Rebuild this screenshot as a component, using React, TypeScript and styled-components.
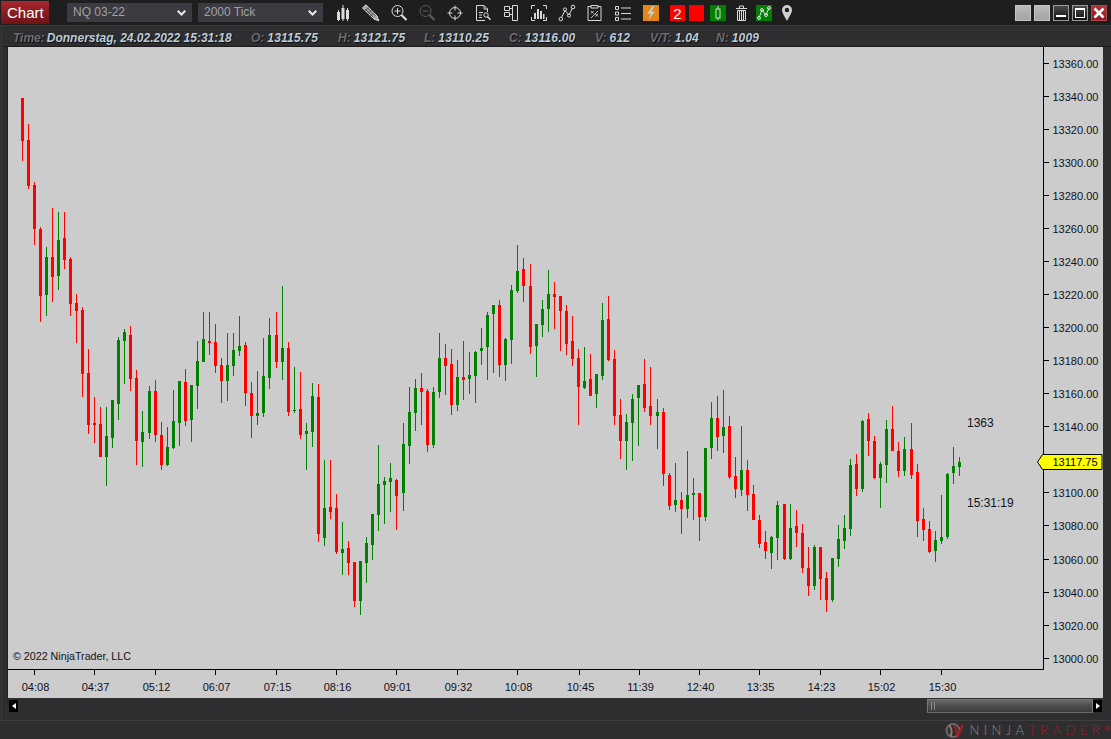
import React from "react";
import styled, { createGlobalStyle } from "styled-components";

const Global = createGlobalStyle`
  html, body { margin: 0; padding: 0; background: #2e2e30; overflow: hidden; }
  body { font-family: "Liberation Sans", Arial, sans-serif; }
`;

const Window = styled.div`
  width: 1111px;
  height: 739px;
  background: #2e2e30;
  display: flex;
  flex-direction: column;
  overflow: hidden;
`;
const TitleBar = styled.div`
  height: 24px;
  padding-top: 1px;
  background: #1e1e1f;
  border-bottom: 1px solid #39393b;
  box-sizing: content-box;
  display: flex;
  align-items: flex-start;
  flex: none;
`;
const ChartTab = styled.div`
  width: 48px;
  height: 23px;
  margin-left: 1px;
  background: linear-gradient(#a8272d, #6d1317);
  color: #fff;
  font-size: 15px;
  line-height: 24px;
  padding-left: 6px;
  box-sizing: border-box;
`;
const Picker = styled.div<{ $first?: boolean }>`
  width: 125px;
  height: 19px;
  margin-top: 2px;
  margin-left: ${(p) => (p.$first ? "18px" : "6px")};
  background: #3b3b41;
  color: #a2a2a8;
  font-size: 12px;
  line-height: 19px;
  padding: 0 6px;
  box-sizing: border-box;
  display: flex;
  justify-content: space-between;
  align-items: center;
`;
const Tools = styled.div`
  display: flex;
  align-items: flex-start;
  margin-left: 6px;
  margin-top: 3px;
`;
const ToolSlot = styled.div<{ $w?: number; $ml?: number }>`
  width: ${(p) => p.$w ?? 28}px;
  margin-left: ${(p) => p.$ml ?? 0}px;
  height: 18px;
  display: flex;
  justify-content: center;
  flex: none;
`;
const ColorBox = styled.div<{ $bg: string; $w?: number; $ml: number }>`
  width: ${(p) => p.$w ?? 16}px;
  margin-left: ${(p) => p.$ml}px;
  height: 16px;
  margin-top: 1px;
  background: ${(p) => p.$bg};
  color: #fff;
  font-size: 15px;
  line-height: 17px;
  text-align: center;
  flex: none;
  display: flex;
  justify-content: center;
`;
const WinButtons = styled.div`
  margin-left: auto;
  margin-right: 4px;
  margin-top: 4px;
  display: flex;
  gap: 3px;
`;
const WinButton = styled.div<{ $kind: "plain" | "dark" | "close" }>`
  width: 16px;
  height: 16px;
  box-sizing: border-box;
  position: relative;
  border: 1px solid ${(p) => (p.$kind === "dark" ? "#9a9a9a" : p.$kind === "close" ? "#b5454a" : "#c4c4c4")};
  background: ${(p) =>
    p.$kind === "plain"
      ? "linear-gradient(#bababa, #a4a4a4)"
      : p.$kind === "dark"
      ? "linear-gradient(#4a4a4a, #111)"
      : "linear-gradient(#b03036, #8a1d22)"};
  display: flex;
  align-items: center;
  justify-content: center;
`;
const Body = styled.div`
  margin-left: 1px;
  border-left: 1px solid #3a3a3c;
  border-bottom: 1px solid #3e3e40;
  padding-bottom: 7px;
  flex: none;
`;
const InfoRow = styled.div`
  height: 21px;
  display: flex;
  align-items: center;
  padding-left: 11px;
  padding-top: 3px;
  box-sizing: border-box;
  font-size: 12px;
  font-weight: bold;
  font-style: italic;
  text-shadow: 1px 1px 0 #111;
  border-bottom: 1px solid #1b1b1b;
`;
const InfoItem = styled.span<{ $w: number; $gap?: number }>`
  width: ${(p) => p.$w}px;
  flex: none;
  white-space: nowrap;
  display: flex;
  gap: ${(p) => p.$gap ?? 3}px;
`;
const InfoLabel = styled.span`
  color: #6c6c70;
`;
const InfoValue = styled.span<{ $num?: boolean }>`
  color: #bccbd8;
  letter-spacing: ${(p) => (p.$num ? "0.2px" : "0")};
`;
const ChartFrame = styled.div`
  margin-left: 6px;
  width: 1095px;
  height: 651px;
  background: #cccccc;
  box-shadow: -1px 0 0 #232325;
`;
const ChartSvg = styled.svg`
  display: block;
  font-family: "Liberation Sans", Arial, sans-serif;
  font-size: 11px;
`;
const ScrollRow = styled.div`
  margin: 1px 0 0 7px;
  width: 1093px;
  height: 14px;
  display: flex;
  align-items: stretch;
`;
const ScrollBtn = styled.div`
  width: 9px;
  background: #000;
  display: flex;
  align-items: center;
  justify-content: center;
  flex: none;
  margin-top: 1px;
  margin-bottom: 1px;
`;
const Arrow = styled.div<{ $left?: boolean }>`
  width: 0;
  height: 0;
  border-top: 3px solid transparent;
  border-bottom: 3px solid transparent;
  ${(p) => (p.$left ? "border-right: 4px solid #fff;" : "border-left: 4px solid #fff;")}
`;
const Thumb = styled.div`
  margin-left: auto;
  width: 166px;
  box-sizing: border-box;
  border: 1px solid #777;
  border-bottom-color: #6a6a6a;
  background: linear-gradient(#696969, #4a4a4a 55%, #3c3c3c);
  display: flex;
  align-items: center;
  padding-left: 3px;
  gap: 1px;
`;
const Grip = styled.div`
  width: 1px;
  height: 8px;
  background: #8a8a8a;
  margin-right: 1px;
`;
const Footer = styled.div`
  flex: 1;
  display: flex;
  align-items: center;
  justify-content: flex-end;
  padding-right: 1px;
  box-sizing: border-box;
`;
const Brand = styled.span<{ $red?: boolean }>`
  font-family: Lato, "Liberation Sans", sans-serif;
  font-weight: 300;
  font-size: 13px;
  letter-spacing: 4.4px;
  color: ${(p) => (p.$red ? "#a31d24" : "#85858a")};
`;
const Reg = styled.span`
  color: #a31d24;
  font-size: 8px;
  align-self: flex-start;
  margin-top: 3px;
  font-family: "Liberation Sans", sans-serif;
`;

type Row = [number, number, number, number, number, "r" | "g"];
const seg = (ox: number, oy: number, rows: Row[]) => rows.map((r) => ({
  x: ox + Math.floor((r[0] - 1) / 3),
  hi: Math.round(oy + r[1] / 3),
  top: Math.round(oy + r[2] / 3),
  bot: Math.round(oy + r[3] / 3),
  lo: Math.round(oy + r[4] / 3),
  c: r[5] === "r" ? "#ff0000" : "#008000",
}));

const candles = [
  ...seg(10, 90, [
    [37, 24, 24, 153, 213, "r"],
    [55, 102, 150, 288, 297, "r"],
    [73, 276, 285, 417, 465, "r"],
    [91, 411, 417, 618, 696, "r"],
    [109, 471, 501, 615, 678, "g"],
    [127, 354, 501, 561, 636, "r"],
    [145, 366, 450, 558, 600, "g"],
    [163, 366, 444, 510, 537, "r"],
    [181, 501, 507, 642, 678, "r"],
  ]),
  ...seg(10, 280, [
    [199, 42, 69, 93, 189, "r"],
    [217, 81, 90, 282, 351, "r"],
    [235, 207, 279, 435, 462, "r"],
    [253, 351, 429, 435, 489, "r"],
    [271, 381, 432, 531, 531, "r"],
    [289, 381, 468, 531, 618, "g"],
    [307, 360, 360, 474, 504, "g"],
    [325, 171, 180, 372, 420, "g"],
    [343, 147, 156, 183, 312, "g"],
    [361, 138, 165, 297, 333, "r"],
    [379, 270, 294, 483, 555, "r"],
    [397, 393, 456, 486, 561, "g"],
    [418, 318, 333, 459, 477, "g"],
    [436, 300, 333, 465, 486, "r"],
    [454, 426, 465, 555, 570, "r"],
    [472, 441, 501, 555, 558, "g"],
    [490, 330, 423, 504, 507, "g"],
    [508, 303, 303, 429, 498, "g"],
  ]),
  ...seg(160, 280, [
    [76, 267, 306, 423, 438, "r"],
    [94, 315, 315, 420, 486, "g"],
    [112, 183, 243, 318, 387, "g"],
    [130, 96, 177, 246, 246, "g"],
    [148, 96, 183, 189, 225, "r"],
    [166, 132, 186, 258, 279, "r"],
    [184, 234, 255, 303, 369, "r"],
    [202, 159, 255, 303, 363, "g"],
    [220, 159, 210, 258, 288, "g"],
    [238, 108, 198, 213, 228, "g"],
    [256, 186, 195, 339, 378, "r"],
    [274, 306, 339, 408, 474, "r"],
    [292, 273, 399, 408, 435, "g"],
    [310, 174, 288, 399, 411, "g"],
    [328, 114, 165, 294, 327, "g"],
    [349, 96, 165, 246, 264, "r"],
    [367, 18, 204, 246, 300, "g"],
    [385, 186, 204, 396, 408, "r"],
    [403, 261, 390, 393, 399, "g"],
    [421, 276, 387, 465, 477, "r"],
    [439, 429, 453, 462, 570, "g"],
    [457, 309, 348, 456, 501, "g"],
    [475, 312, 351, 762, 786, "r"],
    [493, 540, 684, 774, 798, "g"],
    [511, 540, 681, 696, 717, "r"],
    [529, 642, 684, 816, 822, "r"],
    [547, 726, 807, 819, 885, "g"],
    [565, 783, 804, 849, 885, "r"],
    [583, 846, 846, 963, 981, "r"],
    [601, 843, 843, 963, 1005, "g"],
    [619, 771, 789, 849, 909, "g"],
  ]),
  ...seg(360, 240, [
    [37, 822, 822, 915, 960, "g"],
    [55, 615, 732, 825, 873, "g"],
    [73, 711, 723, 735, 852, "g"],
    [91, 669, 714, 726, 816, "g"],
    [109, 717, 720, 768, 870, "r"],
    [130, 549, 612, 759, 813, "g"],
    [148, 441, 516, 618, 672, "g"],
    [166, 417, 444, 519, 573, "g"],
    [184, 399, 444, 456, 555, "r"],
    [202, 447, 453, 615, 636, "r"],
    [220, 441, 456, 615, 624, "g"],
    [238, 279, 354, 456, 474, "g"],
    [256, 312, 354, 378, 465, "r"],
    [274, 327, 372, 495, 525, "r"],
    [292, 360, 411, 495, 513, "g"],
    [310, 303, 411, 420, 480, "r"],
    [328, 336, 405, 417, 462, "g"],
    [346, 333, 336, 408, 489, "g"],
    [364, 264, 324, 333, 375, "g"],
    [382, 216, 225, 321, 420, "g"],
    [400, 195, 195, 222, 399, "g"],
    [418, 180, 195, 375, 411, "r"],
    [436, 294, 297, 375, 423, "g"],
    [454, 135, 150, 300, 372, "g"],
    [472, 15, 93, 153, 159, "g"],
    [490, 54, 87, 138, 186, "r"],
    [511, 72, 138, 321, 342, "r"],
    [529, 252, 252, 318, 411, "g"],
    [547, 180, 207, 255, 291, "g"],
    [565, 90, 162, 207, 276, "g"],
    [583, 126, 162, 171, 267, "r"],
    [601, 168, 168, 213, 333, "r"],
    [619, 195, 213, 312, 345, "r"],
  ]),
  ...seg(560, 290, [
    [37, 78, 153, 207, 228, "r"],
    [55, 177, 204, 291, 405, "r"],
    [73, 171, 273, 294, 297, "g"],
    [91, 192, 267, 318, 318, "r"],
    [109, 252, 252, 312, 354, "g"],
    [127, 39, 90, 258, 270, "g"],
    [145, 18, 87, 210, 213, "r"],
    [163, 180, 207, 378, 405, "r"],
    [181, 327, 375, 453, 507, "r"],
    [199, 372, 396, 453, 540, "g"],
    [217, 312, 327, 399, 513, "g"],
    [235, 285, 285, 324, 468, "g"],
    [253, 207, 282, 354, 366, "r"],
    [271, 231, 348, 378, 405, "r"],
    [292, 327, 366, 378, 477, "g"],
    [310, 354, 366, 552, 588, "r"],
    [328, 549, 555, 648, 660, "r"],
    [346, 519, 630, 645, 666, "g"],
    [364, 606, 630, 657, 732, "r"],
    [382, 483, 615, 657, 684, "g"],
    [400, 564, 609, 615, 690, "g"],
    [418, 609, 609, 681, 753, "r"],
    [436, 474, 474, 681, 693, "g"],
    [454, 336, 384, 474, 507, "g"],
    [472, 318, 384, 441, 483, "r"],
    [490, 300, 411, 438, 489, "g"],
    [508, 378, 408, 561, 567, "r"],
    [526, 501, 558, 597, 624, "r"],
    [544, 408, 540, 600, 618, "g"],
    [562, 510, 540, 615, 663, "r"],
    [580, 585, 612, 690, 690, "r"],
    [598, 675, 690, 762, 774, "r"],
  ]),
  ...seg(760, 400, [
    [16, 393, 426, 453, 477, "r"],
    [34, 408, 411, 459, 507, "g"],
    [52, 303, 315, 414, 480, "g"],
    [73, 312, 312, 477, 480, "r"],
    [91, 312, 384, 477, 480, "g"],
    [109, 330, 378, 399, 441, "r"],
    [127, 372, 399, 504, 519, "r"],
    [145, 441, 504, 558, 588, "r"],
    [163, 435, 441, 558, 570, "g"],
    [181, 441, 441, 537, 600, "r"],
    [199, 516, 534, 600, 636, "r"],
    [217, 474, 474, 600, 606, "g"],
    [235, 375, 417, 477, 501, "g"],
    [253, 345, 384, 423, 447, "g"],
    [271, 177, 195, 387, 408, "g"],
    [289, 162, 192, 267, 288, "r"],
    [307, 60, 63, 267, 276, "g"],
    [325, 39, 57, 123, 168, "r"],
    [343, 108, 123, 234, 237, "r"],
    [361, 186, 192, 234, 324, "g"],
    [379, 60, 87, 195, 249, "g"],
    [397, 18, 87, 153, 153, "r"],
    [415, 126, 153, 213, 231, "r"],
    [433, 111, 147, 213, 228, "g"],
    [454, 69, 147, 225, 237, "r"],
    [472, 192, 216, 363, 411, "r"],
    [490, 324, 357, 390, 423, "r"],
    [508, 363, 387, 456, 459, "r"],
    [526, 393, 420, 453, 486, "g"],
    [544, 285, 411, 423, 432, "g"],
    [562, 219, 222, 411, 417, "g"],
    [580, 141, 198, 219, 252, "g"],
    [598, 171, 186, 201, 228, "g"],
  ]),
];

const prices = Array.from({ length: 19 }, (_, i) => ({
  label: (13360 - i * 20).toFixed(2),
  y: Math.round(62.6 + i * 33.06),
})).filter((p) => p.label !== "13120.00");
const times: [string, number][] = [
  ["04:08", 34], ["04:37", 94], ["05:12", 155], ["06:07", 215], ["07:15", 276], ["08:16", 336],
  ["09:01", 396], ["09:32", 457], ["10:08", 517], ["10:45", 579], ["11:39", 639], ["12:40", 699],
  ["13:35", 759], ["14:23", 820], ["15:02", 880], ["15:30", 941],
];
const ink = "#10101c";

const Chart = () => (
  <ChartSvg width={1095} height={651} viewBox="8 47 1095 651" shapeRendering="crispEdges">
    {candles.map((c, i) => (
      <g key={i} fill={c.c}>
        <rect x={c.x} y={c.hi} width={1} height={Math.max(1, c.lo - c.hi)} />
        <rect x={c.x - 1} y={c.top} width={3} height={Math.max(1, c.bot - c.top)} />
      </g>
    ))}
    <rect x={1043} y={47} width={1} height={623} fill="#000" />
    <rect x={8} y={669} width={1036} height={1} fill="#000" />
    {prices.map((p) => (
      <g key={p.label}>
        <rect x={1043} y={p.y} width={6} height={1} fill="#000" />
        <text x={1052.5} y={p.y + 4.6} fill={ink}>{p.label}</text>
      </g>
    ))}
    {times.map(([t, x]) => (
      <g key={t}>
        <rect x={x} y={669} width={1} height={6} fill="#000" />
        <text x={x + 1.5} y={691} fill={ink} textAnchor="middle">{t}</text>
      </g>
    ))}
    <polygon points="1037.5,462 1042.5,454.5 1102,454.5 1102,469.5 1042.5,469.5" fill="#ffff00" stroke="#000" shapeRendering="auto" />
    <text x={1052.5} y={466} fill="#000">13117.75</text>
    <text x={967} y={427} fill={ink} fontSize={12}>1363</text>
    <text x={967} y={507} fill={ink} fontSize={12}>15:31:19</text>
    <text x={13} y={660} fill={ink} fontSize={10.7}>© 2022 NinjaTrader, LLC</text>
  </ChartSvg>
);

const I = ({ children, size = 18, h = 18 }: { children: React.ReactNode; size?: number; h?: number }) => (
  <svg width={size} height={h} viewBox={`0 0 ${size} ${h}`} fill="none" stroke="#d8d8d8" strokeWidth={1}>
    {children}
  </svg>
);
const Chevron = () => (
  <svg width={9} height={6} viewBox="0 0 9 6" fill="none" stroke="#e8e8e8" strokeWidth={2}>
    <path d="M0.7 0.7 L4.5 4.5 L8.3 0.7" />
  </svg>
);
const Magnifier = ({ c, minusOnly }: { c: string; minusOnly?: boolean }) => (
  <I>
    <g stroke={c}>
      <circle cx={7.5} cy={7} r={5.5} />
      <path d="M4.5 7 H10.5" />
      {!minusOnly && <path d="M7.5 4 V10" />}
      <path d="M11.5 11 L16.5 16" strokeWidth={2.2} />
    </g>
  </I>
);

const App = () => (
  <Window>
    <Global />
    <TitleBar>
      <ChartTab>Chart</ChartTab>
      <Picker $first>NQ 03-22<Chevron /></Picker>
      <Picker>2000 Tick<Chevron /></Picker>
      <Tools>
        <ToolSlot>
          <I>
            <g fill="#dcdcdc" stroke="none">
              <rect x={3} y={8} width={3} height={8} />
              <rect x={4} y={6} width={1} height={11} />
              <rect x={7.5} y={4} width={3} height={11} />
              <rect x={8.5} y={1} width={1} height={16} />
              <rect x={12} y={6} width={3} height={9} />
              <rect x={13} y={4} width={1} height={13} />
            </g>
          </I>
        </ToolSlot>
        <ToolSlot>
          <I>
            <path d="M0.5 4 L4 0.8 L15 12 L16.8 16.8 L12 15 Z" fill="#a8a8a8" stroke="#e4e4e4" />
            <path d="M3 5 L11.5 13.5 M5 3.5 L13.5 12 M7 3.5 L3.5 7 M9.5 6 L6 9.5 M12 8.5 L8.5 12" stroke="#333" strokeWidth={0.8} />
          </I>
        </ToolSlot>
        <ToolSlot><Magnifier c="#dcdcdc" /></ToolSlot>
        <ToolSlot><Magnifier c="#5c5c5c" minusOnly /></ToolSlot>
        <ToolSlot>
          <I>
            <circle cx={9} cy={9} r={5.5} />
            <path d="M9 1.5 V6.5 M9 11.5 V16.5 M1.5 9 H6.5 M11.5 9 H16.5" />
          </I>
        </ToolSlot>
        <ToolSlot>
          <I>
            <path d="M11 16.5 H2.5 V1.5 H10 L13.5 5 V8 M10 1.5 V5 H13.5" />
            <path d="M5 8.5 H9 M5 11 H8 M5 13.5 H8" />
            <circle cx={12} cy={11} r={2.2} />
            <path d="M13.5 12.7 L16.5 15.7" strokeWidth={1.6} />
          </I>
        </ToolSlot>
        <ToolSlot>
          <I>
            <path d="M2.5 2.5 H7.5 V6.5 H2.5 Z M2.5 8.5 H7.5 V12.5 H2.5 Z M10.5 1.5 H15.5 V16.5 H10.5 Z M7.5 4.5 H10.5 M7.5 10.5 H10.5" />
          </I>
        </ToolSlot>
        <ToolSlot>
          <I>
            <path d="M5 1.5 H1.5 V5 M13 1.5 H16.5 V5 M5 16.5 H1.5 V13 M13 16.5 H16.5 V13" />
            <g fill="#d8d8d8" stroke="none">
              <rect x={4} y={9} width={2} height={6} />
              <rect x={7} y={5} width={2} height={10} />
              <rect x={10} y={7} width={2} height={8} />
              <rect x={13} y={10} width={1.5} height={5} />
            </g>
          </I>
        </ToolSlot>
        <ToolSlot>
          <I>
            <path d="M3.5 13.5 L7 6.5 L11 11 L14.5 4" />
            <circle cx={2.8} cy={15} r={1.8} />
            <circle cx={7} cy={5.5} r={1.6} />
            <circle cx={11} cy={11.5} r={1.6} />
            <circle cx={15} cy={3} r={1.8} />
          </I>
        </ToolSlot>
        <ToolSlot>
          <I>
            <path d="M5 2.5 H2 V16.5 H15 V2.5 H12 M5 1.5 H12 V4 H5 Z" />
            <path d="M5 7 L7.5 9.5 M7.5 7 L5 9.5 M9.5 10 L12 12.5 M12 10 L9.5 12.5 M5 14 L12 7" strokeWidth={0.9} />
          </I>
        </ToolSlot>
        <ToolSlot>
          <I>
            <path d="M1.5 2.5 H4.5 V5.5 H1.5 Z M1.5 8 H4.5 V11 H1.5 Z M1.5 13.5 H4.5 V16.5 H1.5 Z M7 4 H17 M7 9.5 H17 M7 15 H17" />
          </I>
        </ToolSlot>
        <ToolSlot>
          <svg width={16} height={16} viewBox="0 0 16 16" style={{ marginTop: 1 }}>
            <rect width={16} height={16} fill="#e2861a" />
            <path d="M9.5 1 L4 9 H7.5 L5.5 15 L12 6.5 H8.5 L11.5 1 Z" fill="#c9c9c9" />
          </svg>
        </ToolSlot>
        <ColorBox $bg="#ff0000" $w={15} $ml={5}>2</ColorBox>
        <ColorBox $bg="#ff0000" $w={15} $ml={4} />
        <ColorBox $bg="#008000" $ml={6}>
          <svg width={8} height={16} viewBox="0 0 8 16" fill="none" stroke="#d8d8d8">
            <rect x={2} y={4} width={4} height={9} />
            <path d="M4 1 V4 M4 13 V15" />
          </svg>
        </ColorBox>
        <ToolSlot $w={11} $ml={10}>
          <svg width={11} height={18} viewBox="0 0 11 18" fill="none" stroke="#d8d8d8">
            <path d="M0 4.5 H11 M3.5 4 V2 H7.5 V4" />
            <path d="M1.5 6.5 H9.5 V16.5 H1.5 Z M3.5 7 V16 M5.5 7 V16 M7.5 7 V16" />
          </svg>
        </ToolSlot>
        <ColorBox $bg="#008000" $ml={9}>
          <svg width={16} height={16} viewBox="0 0 16 16" fill="none" stroke="#e0e0e0">
            <path d="M3 13 L6 5 L10 10 L13 3" />
            <circle cx={3} cy={13} r={1.5} />
            <circle cx={6} cy={5} r={1.5} />
            <circle cx={10} cy={10} r={1.5} />
            <circle cx={13} cy={3} r={1.5} />
          </svg>
        </ColorBox>
        <ToolSlot $w={14} $ml={8}>
          <svg width={12} height={18} viewBox="0 0 12 18">
            <path fillRule="evenodd" d="M6 1 A5 5 0 0 1 11 6 C11 9 8 13 6 17 C4 13 1 9 1 6 A5 5 0 0 1 6 1 Z M6 3.8 A2.2 2.2 0 1 0 6 8.2 A2.2 2.2 0 1 0 6 3.8 Z" fill="#d0d0d0" />
          </svg>
        </ToolSlot>
      </Tools>
      <WinButtons>
        <WinButton $kind="plain" />
        <WinButton $kind="plain" />
        <WinButton $kind="dark">
          <svg width={14} height={14} viewBox="0 0 14 14"><rect x={2} y={9} width={10} height={2} fill="#fff" /></svg>
        </WinButton>
        <WinButton $kind="dark">
          <svg width={14} height={14} viewBox="0 0 14 14" fill="none" stroke="#fff"><rect x={2.5} y={2.5} width={9} height={9} /><path d="M2.5 3.5 H11.5" /></svg>
        </WinButton>
        <WinButton $kind="close">
          <svg width={14} height={14} viewBox="0 0 14 14" stroke="#fff" strokeWidth={2.6}><path d="M2.5 2.5 L11.5 11.5 M11.5 2.5 L2.5 11.5" /></svg>
        </WinButton>
      </WinButtons>
    </TitleBar>
    <Body>
      <InfoRow>
        <InfoItem $w={238} $gap={2}><InfoLabel>Time:</InfoLabel><InfoValue>Donnerstag, 24.02.2022 15:31:18</InfoValue></InfoItem>
        <InfoItem $w={87}><InfoLabel>O:</InfoLabel><InfoValue $num>13115.75</InfoValue></InfoItem>
        <InfoItem $w={86}><InfoLabel>H:</InfoLabel><InfoValue $num>13121.75</InfoValue></InfoItem>
        <InfoItem $w={85}><InfoLabel>L:</InfoLabel><InfoValue $num>13110.25</InfoValue></InfoItem>
        <InfoItem $w={86}><InfoLabel>C:</InfoLabel><InfoValue $num>13116.00</InfoValue></InfoItem>
        <InfoItem $w={55}><InfoLabel>V:</InfoLabel><InfoValue $num>612</InfoValue></InfoItem>
        <InfoItem $w={66}><InfoLabel>V/T:</InfoLabel><InfoValue $num>1.04</InfoValue></InfoItem>
        <InfoItem $w={60}><InfoLabel>N:</InfoLabel><InfoValue $num>1009</InfoValue></InfoItem>
      </InfoRow>
      <ChartFrame><Chart /></ChartFrame>
      <ScrollRow>
        <ScrollBtn><Arrow $left /></ScrollBtn>
        <Thumb><Grip /><Grip /></Thumb>
        <ScrollBtn><Arrow /></ScrollBtn>
      </ScrollRow>
    </Body>
    <Footer>
      <svg width={20} height={15} viewBox="0 0 20 15" style={{ marginRight: 5 }} fill="none">
        <ellipse cx={8} cy={7.5} rx={6.5} ry={6.5} stroke="#6a6a6a" strokeWidth={2} />
        <path d="M4.5 2.5 C7 6 7 10 5.5 13.5" stroke="#8a7a6a" strokeWidth={2} />
        <path d="M9.5 2.5 L13 13 L18 1.5" stroke="#a31d24" strokeWidth={2.4} />
      </svg>
      <Brand>NINJA</Brand><Brand $red>TRADER</Brand><Reg>®</Reg>
    </Footer>
  </Window>
);

export default App;
